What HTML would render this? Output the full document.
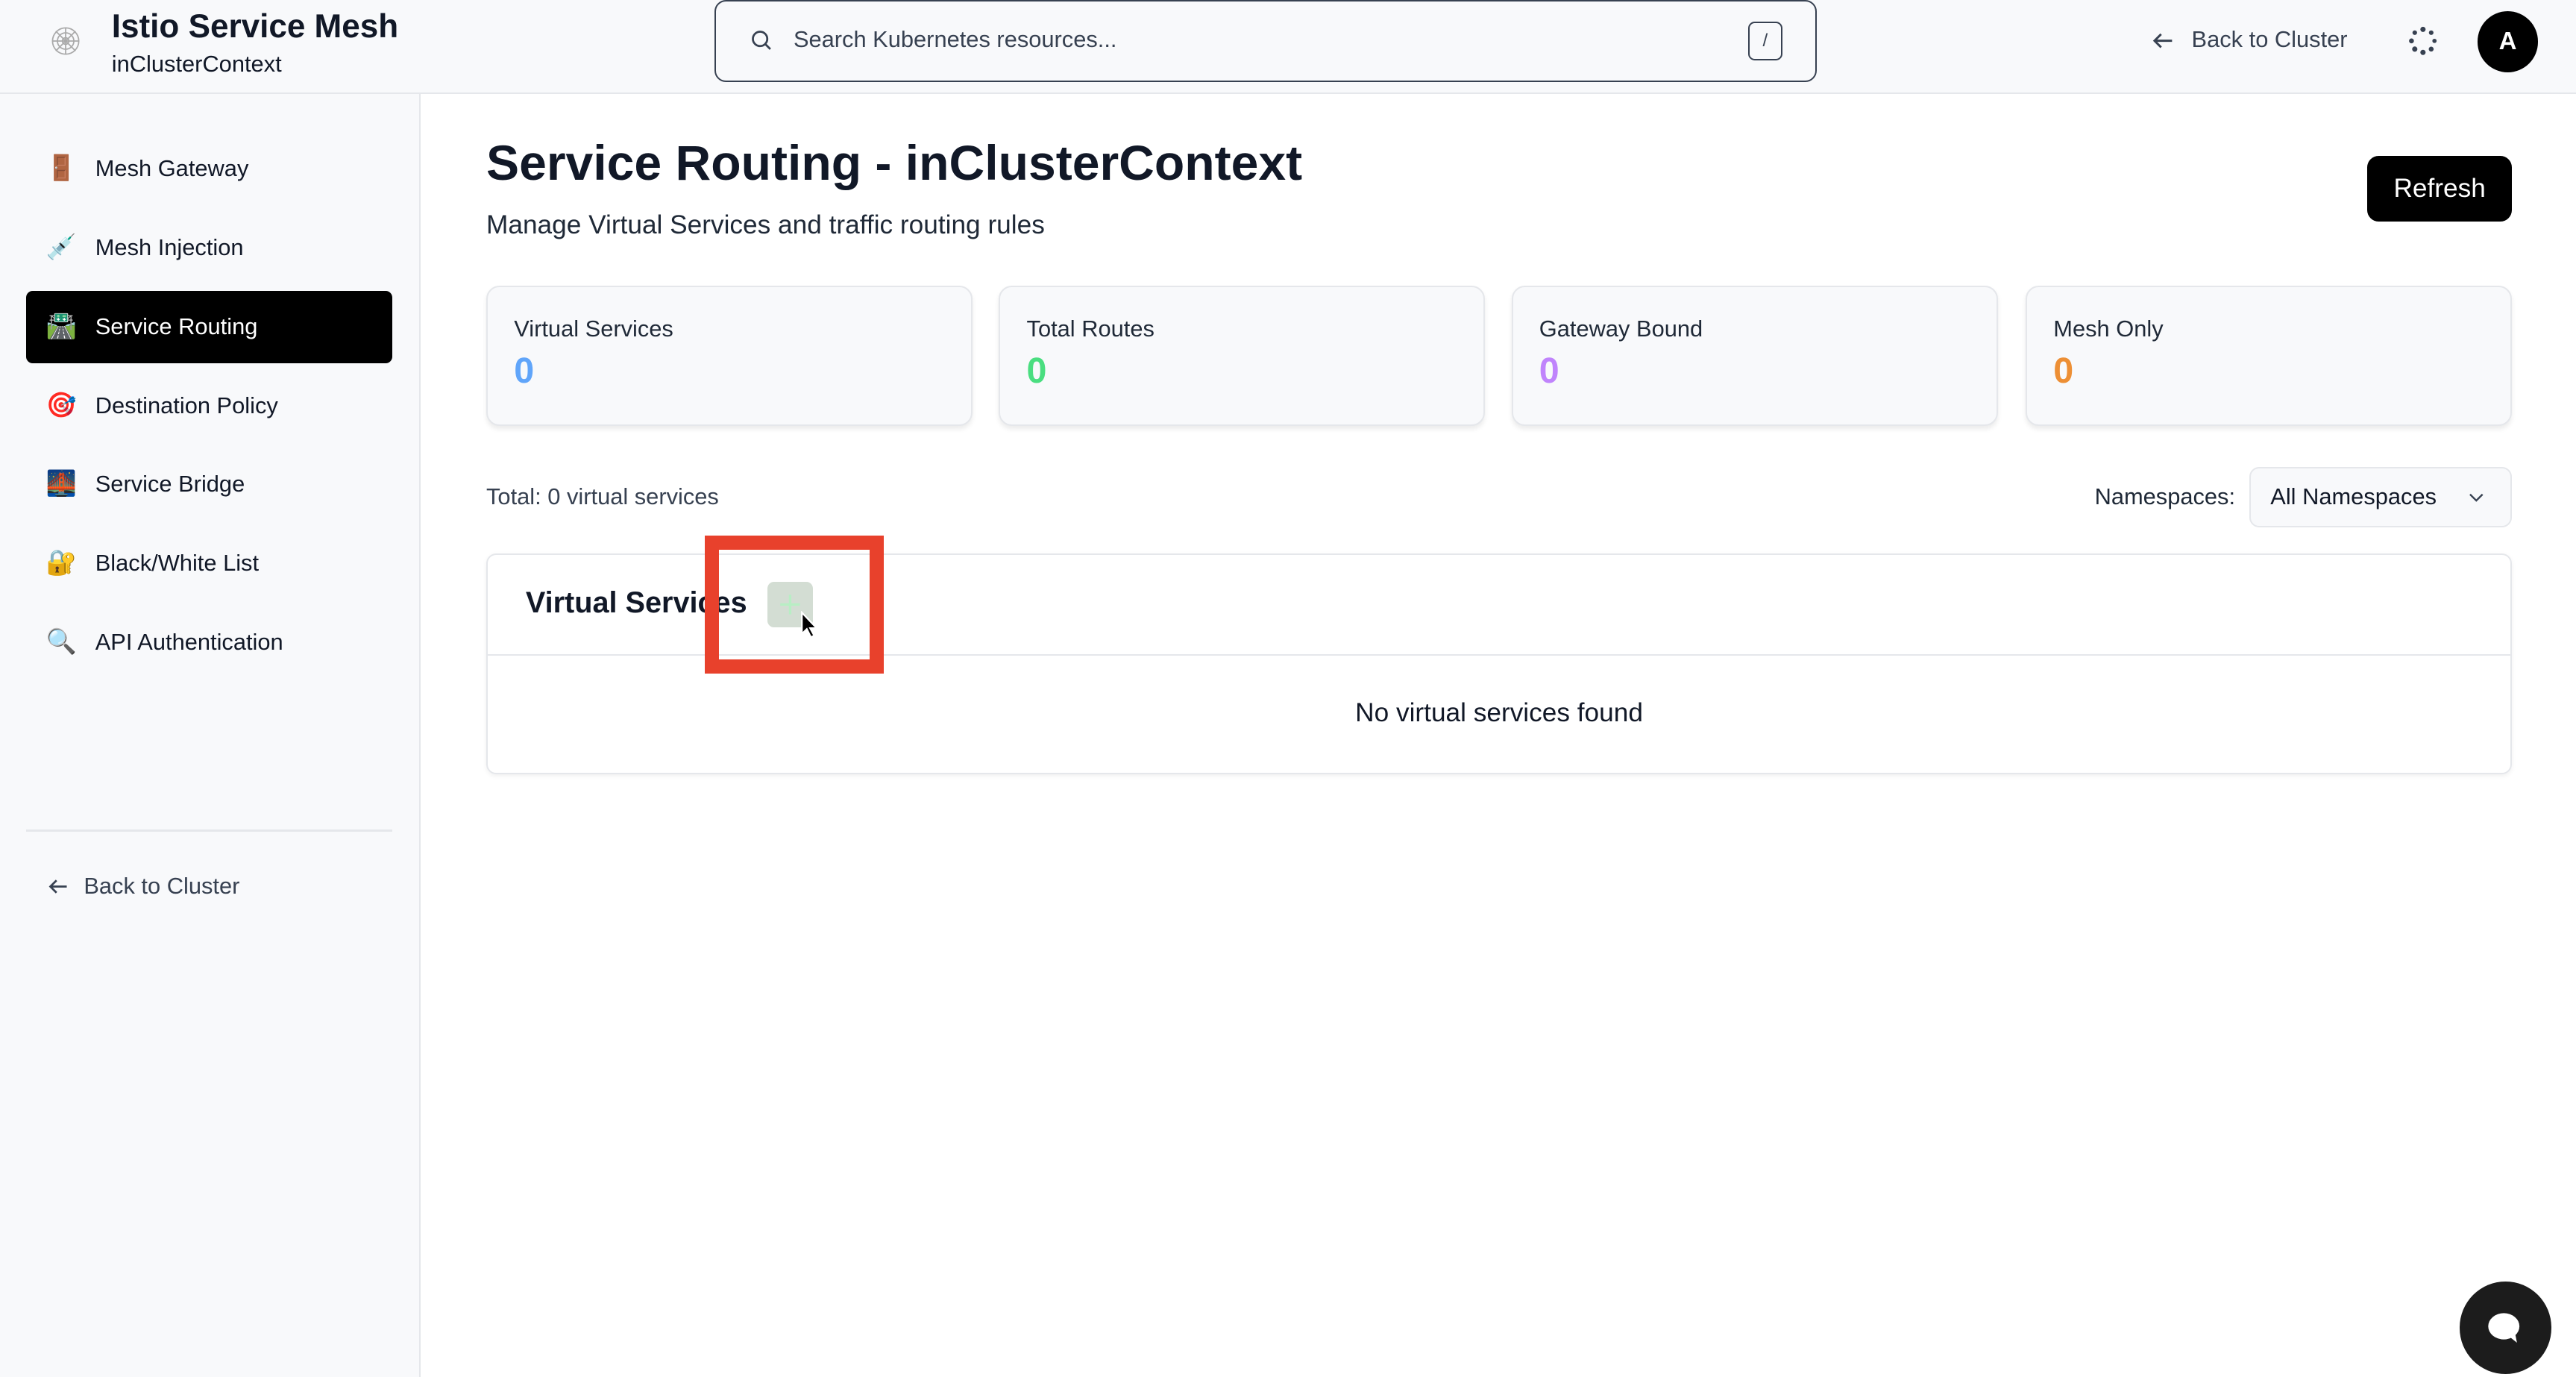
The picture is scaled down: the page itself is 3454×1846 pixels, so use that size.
<!DOCTYPE html>
<html><head><meta charset="utf-8"><style>
*{box-sizing:border-box;margin:0;padding:0}
html,body{width:3454px;height:1846px;overflow:hidden;background:#fff}
#r{zoom:2.2028;width:1568px;height:838px;position:relative;font-family:"Liberation Sans",Arial,sans-serif;color:#111827;background:#fff}
.a{position:absolute;white-space:nowrap}
.hdr{left:0;top:0;width:1568px;height:57px;background:#f8f9fb;border-bottom:1px solid #e5e7eb}
.side{left:0;top:57px;width:256px;height:781px;background:#f8f9fb;border-right:1px solid #e5e7eb}
.it{left:16px;width:223px;height:44px;font-size:14px;line-height:44px;padding-left:42px;color:#111827}
.ic{position:absolute;left:12px;top:0;font-size:15px;font-family:"Noto Color Emoji","DejaVu Sans",sans-serif}
.card{top:174px;width:296px;height:85px;background:#f8f9fb;border:1px solid #e5e7eb;border-radius:8px;box-shadow:0 2px 3px rgba(0,0,0,.08)}
.card .l{position:absolute;left:16px;top:17px;font-size:14px;color:#1f2937}
.card .n{position:absolute;left:16px;top:38px;font-size:22px;font-weight:bold}
</style></head><body><div id="r">
<div class="a hdr"></div>
<svg class="a" style="left:30px;top:15px" width="20" height="20" viewBox="0 0 20 20" fill="none" stroke="#aaa" stroke-width=".8"><circle cx="10" cy="10" r="8"/><circle cx="10" cy="10" r="5"/><circle cx="10" cy="10" r="2"/><path d="M10 2v16M2 10h16M4 4l12 12M16 4L4 16"/></svg>
<div class="a" style="left:68px;top:5px;font-size:20px;font-weight:bold">Istio Service Mesh</div>
<div class="a" style="left:68px;top:31px;font-size:14px">inClusterContext</div>
<div class="a" style="left:435px;top:0;width:671px;height:50px;border:1px solid #374151;border-radius:7px;background:#f8f9fb"></div>
<svg class="a" style="left:456px;top:17px" width="15" height="15" viewBox="0 0 24 24" fill="none" stroke="#374151" stroke-width="2"><circle cx="11" cy="11" r="7"/><path d="M16 16l5 5"/></svg>
<div class="a" style="left:483px;top:16px;font-size:14px;color:#374151">Search Kubernetes resources...</div>
<div class="a" style="left:1064px;top:13px;width:21px;height:24px;border:1px solid #374151;border-radius:4px;font-size:11px;text-align:center;line-height:22px;color:#374151">/</div>
<svg class="a" style="left:1309px;top:17px" width="16" height="16" viewBox="0 0 24 24" fill="none" stroke="#374151" stroke-width="2"><path d="M20 12H4M10 6l-6 6 6 6"/></svg>
<div class="a" style="left:1334px;top:16px;font-size:14px;color:#374151">Back to Cluster</div>
<svg class="a" style="left:1466px;top:16px" width="18" height="18" viewBox="0 0 18 18" fill="#374151"><circle cx="9" cy="2" r="1.6"/><circle cx="14" cy="4" r="1.4"/><circle cx="16" cy="9" r="1.3"/><circle cx="14" cy="14" r="1.5"/><circle cx="9" cy="16" r="1.6"/><circle cx="4" cy="14" r="1.6"/><circle cx="2" cy="9" r="1.5"/><circle cx="4" cy="4" r="1.4"/></svg>
<div class="a" style="left:1508px;top:7px;width:37px;height:37px;border-radius:50%;background:#000;color:#fff;font-weight:bold;font-size:15px;text-align:center;line-height:37px">A</div>

<div class="a side"></div>
<div class="a it" style="top:81px"><span class="ic">🚪</span>Mesh Gateway</div>
<div class="a it" style="top:129px"><span class="ic">💉</span>Mesh Injection</div>
<div class="a it" style="top:177px;background:#000;color:#fff;border-radius:4px"><span class="ic">🛣️</span>Service Routing</div>
<div class="a it" style="top:225px"><span class="ic">🎯</span>Destination Policy</div>
<div class="a it" style="top:273px"><span class="ic">🌉</span>Service Bridge</div>
<div class="a it" style="top:321px"><span class="ic">🔐</span>Black/White List</div>
<div class="a it" style="top:369px"><span class="ic">🔍</span>API Authentication</div>
<div class="a" style="left:16px;top:505px;width:223px;height:1px;background:#e5e7eb"></div>
<svg class="a" style="left:28px;top:532px" width="15" height="15" viewBox="0 0 24 24" fill="none" stroke="#374151" stroke-width="2"><path d="M20 12H4M10 6l-6 6 6 6"/></svg>
<div class="a" style="left:51px;top:531px;font-size:14px;color:#374151">Back to Cluster</div>

<div class="a" style="left:296px;top:82px;font-size:30px;font-weight:bold">Service Routing - inClusterContext</div>
<div class="a" style="left:296px;top:128px;font-size:16px;color:#1f2937">Manage Virtual Services and traffic routing rules</div>
<div class="a" style="left:1441px;top:95px;width:88px;height:40px;background:#000;border-radius:7px;color:#fff;font-size:16px;text-align:center;line-height:40px">Refresh</div>

<div class="a card" style="left:296px"><div class="l">Virtual Services</div><div class="n" style="color:#60a5fa">0</div></div>
<div class="a card" style="left:608px"><div class="l">Total Routes</div><div class="n" style="color:#4ade80">0</div></div>
<div class="a card" style="left:920px"><div class="l">Gateway Bound</div><div class="n" style="color:#c084fc">0</div></div>
<div class="a card" style="left:1233px"><div class="l">Mesh Only</div><div class="n" style="color:#ed8f35">0</div></div>

<div class="a" style="left:296px;top:294px;font-size:14px;color:#374151">Total: 0 virtual services</div>
<div class="a" style="left:1275px;top:294px;font-size:14px;color:#1f2937">Namespaces:</div>
<div class="a" style="left:1369px;top:284px;width:160px;height:37px;border:1px solid #e5e7eb;border-radius:6px;background:#f8f9fb"></div>
<div class="a" style="left:1382px;top:294px;font-size:14px">All Namespaces</div>
<svg class="a" style="left:1501px;top:296px" width="13" height="13" viewBox="0 0 24 24" fill="none" stroke="#374151" stroke-width="2"><path d="M5 9l7 7 7-7"/></svg>

<div class="a" style="left:296px;top:337px;width:1233px;height:134px;border:1px solid #e5e7eb;border-radius:6px;box-shadow:0 1px 3px rgba(0,0,0,.06)"></div>
<div class="a" style="left:297px;top:398px;width:1231px;height:1px;background:#e5e7eb"></div>
<div class="a" style="left:320px;top:357px;font-size:18px;font-weight:bold">Virtual Services</div>
<div class="a" style="left:467px;top:354px;width:28px;height:28px;background:#d3ddd3;border-radius:4px"></div>
<svg class="a" style="left:474px;top:361px" width="14" height="14" viewBox="0 0 14 14" fill="none" stroke="#b8eec4" stroke-width="1.5"><path d="M7 1v12M1 7h12"/></svg>
<svg class="a" style="left:487px;top:372px" width="12" height="18" viewBox="0 0 12 18"><path d="M1 1v13l3-3 2.5 5 2-1-2.5-4.5H10z" fill="#000" stroke="#fff" stroke-width="1"/></svg>
<div class="a" style="left:429px;top:326px;width:109px;height:84px;border:9px solid #e8412c"></div>
<div class="a" style="left:296px;top:425px;width:1233px;text-align:center;font-size:16px">No virtual services found</div>

<div class="a" style="left:1497px;top:780px;width:56px;height:56px;border-radius:50%;background:#1c1c1c"></div>
<svg class="a" style="left:1513px;top:797px" width="24" height="22" viewBox="0 0 24 22"><ellipse cx="11" cy="10" rx="9.5" ry="8" fill="#fff"/><path d="M14 16l5 4-1-5z" fill="#fff"/></svg>
</div></body></html>
